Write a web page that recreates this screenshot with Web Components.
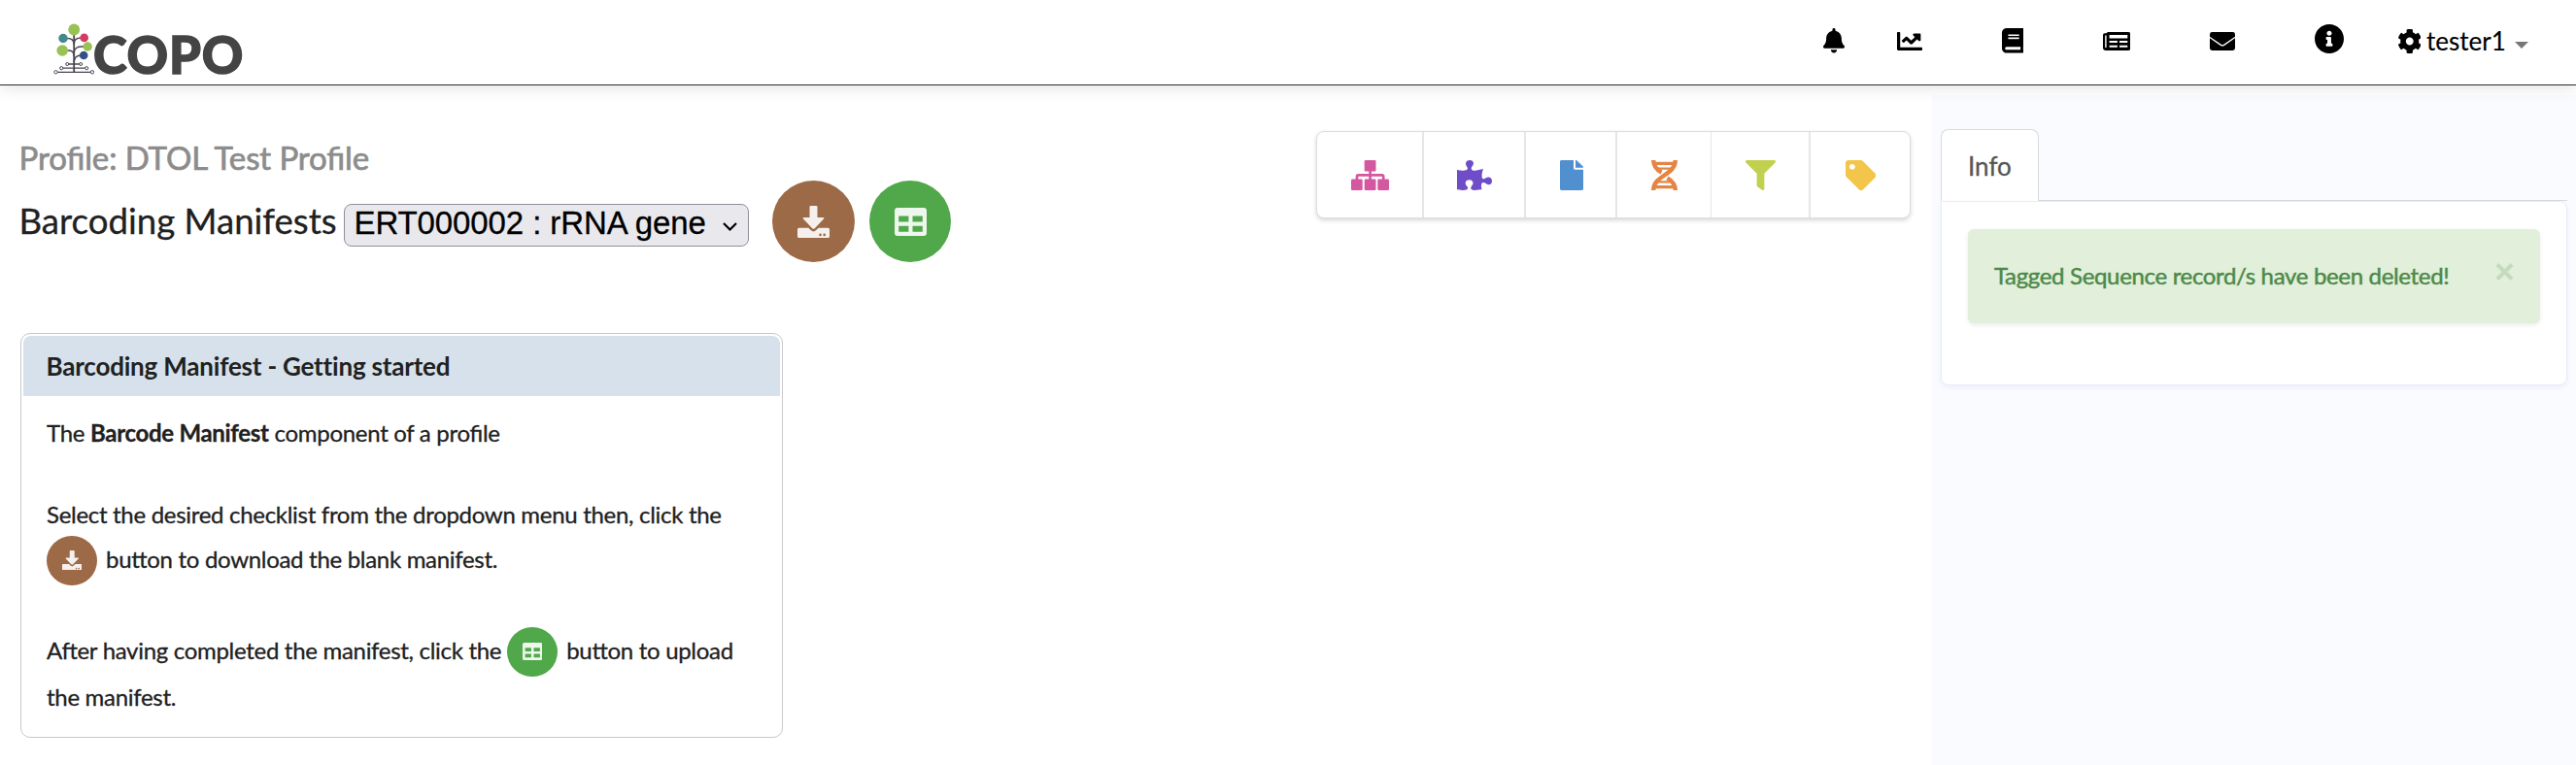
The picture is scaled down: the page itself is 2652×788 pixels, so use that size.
<!DOCTYPE html>
<html lang="en">
<head>
<meta charset="utf-8">
<title>COPO</title>
<style>
html,body{margin:0;background:#fff}
body{font-family:Lato,"Liberation Sans",sans-serif;color:#212121;font-size:24px;font-feature-settings:"liga" 1;-webkit-text-stroke:.3px currentColor}
</style>
</head>
<body>
<copo-app></copo-app>
<script>
const ICONS = {
bell:['0 0 448 512','<path d="M224 512c35.32 0 63.97-28.65 63.97-64H160.03c0 35.35 28.65 64 63.97 64zm215.39-149.71c-19.32-20.76-55.47-51.99-55.47-154.29 0-77.7-54.48-139.9-127.94-155.16V32c0-17.67-14.32-32-31.98-32s-31.98 14.33-31.98 32v20.84C118.56 68.1 64.08 130.3 64.08 208c0 102.3-36.15 133.53-55.47 154.29-6 6.45-8.66 14.16-8.61 21.71.11 16.4 12.98 32 32.1 32h383.8c19.12 0 32-15.6 32.1-32 .05-7.55-2.61-15.27-8.61-21.71z"/>'],
chart:['0 64 512 384','<path d="M496 384H64V80c0-8.84-7.16-16-16-16H16C7.16 64 0 71.16 0 80v336c0 17.67 14.33 32 32 32h464c8.84 0 16-7.16 16-16v-32c0-8.84-7.16-16-16-16zM464 96H345.94c-21.38 0-32.09 25.85-16.97 40.97l32.4 32.4L288 242.75l-73.37-73.37c-12.5-12.5-32.76-12.5-45.25 0l-68.69 68.69c-6.25 6.25-6.25 16.38 0 22.63l22.62 22.62c6.25 6.25 16.38 6.25 22.63 0L192 237.25l73.37 73.37c12.5 12.5 32.76 12.5 45.25 0l96-96 32.4 32.4c15.12 15.12 40.97 4.41 40.97-16.97V112c.01-8.84-7.15-16-15.99-16z"/>'],
book:['0 0 448 512','<path d="M448 360V24c0-13.3-10.7-24-24-24H96C43 0 0 43 0 96v320c0 53 43 96 96 96h328c13.3 0 24-10.7 24-24v-16c0-7.5-3.5-14.3-8.9-18.7-4.2-15.4-4.2-59.3 0-74.7 5.4-4.3 8.9-11.1 8.9-18.6zM128 134c0-3.3 2.7-6 6-6h212c3.3 0 6 2.7 6 6v20c0 3.3-2.7 6-6 6H134c-3.3 0-6-2.7-6-6v-20zm0 64c0-3.3 2.7-6 6-6h212c3.3 0 6 2.7 6 6v20c0 3.3-2.7 6-6 6H134c-3.3 0-6-2.7-6-6v-20zm253.4 250H96c-17.7 0-32-14.3-32-32 0-17.6 14.4-32 32-32h285.4c-1.9 17.1-1.9 46.9 0 64z"/>'],
news:['0 0 28.5 19','<path fill-rule="evenodd" d="M6 0H26a2.5 2.5 0 0 1 2.5 2.500V16.500A2.500 2.500 0 0 1 26 19H3A3 3 0 0 1 0 16V3A1.800 1.800 0 0 1 1.800 1.200H3.500A2.500 2.500 0 0 1 6 0ZM2.200 3.500V15.600A.7 .7 0 0 0 3.600 15.600V3.500ZM6.600 3V6.400H25.300V3ZM6.600 9V11H14.900V9ZM17 9V11H25.300V9ZM6.600 13.700V15.800H14.900V13.700ZM17 13.700V15.800H25.300V13.700Z"/>'],
mail:['0 0 26 19','<rect width="26" height="19" rx="2.400"/><path d="M-.5 5.200 11.400 13.400Q13 14.400 14.600 13.400L26.500 5.200" fill="none" stroke="#fff" stroke-width="1.300"/>'],
info:['8 8 496 496','<path d="M256 8C119.043 8 8 119.083 8 256c0 136.997 111.043 248 248 248s248-111.003 248-248C504 119.083 392.957 8 256 8zm0 110c23.196 0 42 18.804 42 42s-18.804 42-42 42-42-18.804-42-42 18.804-42 42-42zm56 254c0 6.627-5.373 12-12 12h-88c-6.627 0-12-5.373-12-12v-24c0-6.627 5.373-12 12-12h12v-64h-12c-6.627 0-12-5.373-12-12v-24c0-6.627 5.373-12 12-12h64c6.627 0 12 5.373 12 12v100h12c6.627 0 12 5.373 12 12v24z"/>'],
cog:['18 8 476 496','<path d="M487.4 315.7l-42.6-24.6c4.3-23.2 4.3-47 0-70.2l42.6-24.6c4.9-2.8 7.1-8.6 5.5-14-11.1-35.6-30-67.8-54.7-94.6-3.8-4.1-10-5.1-14.8-2.3L380.8 110c-17.9-15.4-38.5-27.3-60.8-35.1V25.8c0-5.6-3.9-10.5-9.4-11.7-36.7-8.2-74.3-7.8-109.2 0-5.5 1.2-9.4 6.1-9.4 11.7V75c-22.2 7.9-42.8 19.8-60.8 35.1L88.7 85.5c-4.9-2.8-11-1.9-14.8 2.3-24.7 26.7-43.6 58.9-54.7 94.6-1.7 5.4.6 11.2 5.5 14L67.3 221c-4.3 23.2-4.3 47 0 70.2l-42.6 24.6c-4.9 2.8-7.1 8.6-5.5 14 11.1 35.6 30 67.8 54.7 94.6 3.8 4.1 10 5.1 14.8 2.3l42.6-24.6c17.9 15.4 38.5 27.3 60.8 35.1v49.2c0 5.6 3.9 10.5 9.4 11.7 36.7 8.2 74.3 7.8 109.2 0 5.5-1.2 9.4-6.1 9.4-11.7v-49.2c22.2-7.9 42.8-19.8 60.8-35.1l42.6 24.6c4.9 2.8 11 1.9 14.8-2.3 24.7-26.7 43.6-58.9 54.7-94.6 1.5-5.5-.7-11.3-5.6-14.1zM256 336c-44.1 0-80-35.9-80-80s35.9-80 80-80 80 35.9 80 80-35.9 80-80 80z"/>'],
caret:['0 0 14 7','<path d="M0 0H14L7 7Z"/>'],
chevron:['0 0 15 9','<path d="M1 1 7.500 7.500 14 1" fill="none" stroke="#000" stroke-width="2.200"/>'],
sitemap:['0 0 39 31','<rect x="13.700" width="11.800" height="11.400" rx="1.200"/><rect y="19.600" width="11.700" height="11.400" rx="1.200"/><rect x="13.700" y="19.600" width="11.800" height="11.400" rx="1.200"/><rect x="27.300" y="19.600" width="11.700" height="11.400" rx="1.200"/><path d="M19.600 11V20M6 20V16.800Q6 15.300 7.500 15.300H31.700Q33.200 15.300 33.200 16.800V20" fill="none" stroke="currentColor" stroke-width="2.700"/>'],
puzzle:['0 0 576 512','<path d="M519.442 288.651c-41.519 0-59.5 31.593-82.058 31.593C377.409 320.244 432 144 432 144s-196.288 80-196.288-3.297c0-35.827 36.288-46.25 36.288-85.985C272 19.216 243.885 0 210.539 0c-34.654 0-66.366 18.891-66.366 56.346 0 41.364 31.711 59.277 31.711 81.75C175.885 207.719 0 166.758 0 166.758v333.237s178.635 41.047 178.635-28.662c0-22.473-40-40.107-40-81.471 0-37.456 29.25-56.346 63.577-56.346 33.673 0 61.788 19.216 61.788 54.717 0 39.735-36.288 50.158-36.288 85.985 0 60.803 129.675 25.73 181.23 25.73 0 0-34.725-120.101 25.827-120.101 35.962 0 46.423 36.152 86.308 36.152C556.712 416 576 387.99 576 354.443c0-34.199-18.962-65.792-56.558-65.792z"/>'],
file:['0 0 384 512','<path d="M224 136V0H24C10.700 0 0 10.700 0 24v464c0 13.300 10.700 24 24 24h336c13.300 0 24-10.700 24-24V160H248c-13.200 0-24-10.800-24-24zm160-14.100v6.100H256V0h6.100c6.400 0 12.500 2.500 17 7l97.900 98c4.500 4.500 7 10.600 7 16.900z"/>'],
dna:['0 0 27 31','<g fill="none" stroke="currentColor"><path d="M3 3.400H24M3 27.600H24" stroke-width="3.400"/><path d="M5 8.600H22M6 22.400H21" stroke-width="2.200"/><path d="M24.800 0C24.800 15.500 2.200 15.500 2.200 31" stroke-width="4.400"/><path d="M2.200 0C2.200 6.500 6 10 10.500 12.600M16.500 18.400C21 21 24.800 24.500 24.800 31" stroke-width="4.400"/></g>'],
filter:['0 0 512 512','<path d="M487.976 0H24.028C2.710 0-8.047 25.866 7.058 40.971L192 225.941V432c0 7.831 3.821 15.170 10.237 19.662l80 55.980C298.020 518.690 320 507.493 320 487.980V225.941l184.947-184.970C520.021 25.896 509.338 0 487.976 0z"/>'],
tag:['0 0 512 512','<path d="M0 252.118V48C0 21.490 21.490 0 48 0h204.118a48 48 0 0 1 33.941 14.059l211.882 211.882c18.745 18.745 18.745 49.137 0 67.882L293.823 497.941c-18.745 18.745-49.137 18.745-67.882 0L14.059 286.059A48 48 0 0 1 0 252.118zM112 64c-26.510 0-48 21.490-48 48s21.490 48 48 48 48-21.490 48-48-21.490-48-48-48z"/>'],
download:['0 0 33 33','<path fill-rule="evenodd" d="M13.700 0H19.300Q20.500 0 20.500 1.200V12H26.300Q28.200 12 27 13.600L18 23.100Q16.500 24.600 15 23.100L6 13.600Q4.800 12 6.700 12H12.500V1.200Q12.500 0 13.700 0Z"/><path fill-rule="evenodd" d="M1.500 22.700H11.300L13.700 25.100Q16.500 27.700 19.300 25.100L21.700 22.700H31.500Q33 22.700 33 24.200V31.500Q33 33 31.500 33H1.500Q0 33 0 31.500V24.200Q0 22.700 1.500 22.700ZM23.500 28.600a1.300 1.300 0 1 0 0 2.600a1.300 1.300 0 1 0 0-2.600ZM27.700 28.600a1.300 1.300 0 1 0 0 2.600a1.300 1.300 0 1 0 0-2.600Z"/>'],
table:['0 0 33 29','<path fill-rule="evenodd" d="M3 0H30Q33 0 33 3V26Q33 29 30 29H3Q0 29 0 26V3Q0 0 3 0ZM4.200 8.500V14.500H14.400V8.500ZM18.500 8.500V14.500H28.800V8.500ZM4.200 18.700V24.700H14.400V18.700ZM18.500 18.700V24.700H28.800V18.700Z"/>']
};
class Base extends HTMLElement{
  constructor(){super();this.attachShadow({mode:'open'});}
  connectedCallback(){this.shadowRoot.innerHTML=this.view();}
}
customElements.define('copo-icon',class extends Base{
  view(){const [vb,body]=ICONS[this.getAttribute('name')];
    return `<style>:host{display:block;flex:none}svg{display:block}</style><svg width="${this.getAttribute('w')}" height="${this.getAttribute('h')}" viewBox="${vb}" preserveAspectRatio="none" fill="currentColor">${body}</svg>`;}
});
customElements.define('copo-logo',class extends Base{
  view(){return `<style>:host{display:flex;color:#444}svg{display:block;flex:none}
  .w{font:900 52.5px/64px Lato,sans-serif;letter-spacing:.8px;margin-left:-.5px;-webkit-text-stroke:1.4px currentColor}</style>
  <svg width="42" height="54" viewBox="54.500 24 42 54" fill="none" stroke="#4a4452" stroke-width="1.300">
  <path stroke-width="1.800" d="M75.700 34V75"/><path stroke-width="1.500" d="M68 39.500Q75.700 39 75.700 46M83 39Q75.700 39 75.700 45M69 52Q75.700 51.500 75.700 58M86 48Q75.700 47 75.700 55M83 57Q76 57 75.700 64"/>
  <path d="M70 66H82M64 70.200H88M58.500 74.300H93"/>
  <g fill="#fff" stroke-width="1"><circle cx="68.700" cy="66" r="1.500"/><circle cx="82.700" cy="66" r="1.500"/><circle cx="62.700" cy="70.200" r="1.600"/><circle cx="88.700" cy="70.200" r="1.600"/><circle cx="57" cy="74.300" r="1.700"/><circle cx="94.500" cy="74.300" r="1.700"/></g>
  <g stroke="none"><circle cx="75.700" cy="30.500" r="5.900" fill="#98c254"/><circle cx="64.500" cy="39.500" r="4.700" fill="#43888a"/><circle cx="86.200" cy="38.900" r="4.300" fill="#d43a63"/><circle cx="63.700" cy="52" r="5.800" fill="#98c254"/><circle cx="89.700" cy="48" r="4.700" fill="#98c254"/><circle cx="85.700" cy="57" r="4.300" fill="#33508a"/></g></svg><span class="w">COPO</span>`;}
});
customElements.define('copo-navbar',class extends Base{
  view(){return `<style>:host{display:flex;box-sizing:border-box;height:88px;border-bottom:1px solid #2c2c2c;box-shadow:0 2px 16px rgba(0,0,0,.12);background:#fff;color:#000;position:relative;z-index:1}
  copo-logo{margin:24px 0 0 54.500px;height:60px}
  nav{margin-left:auto;display:flex;height:84px;align-items:center;padding-right:49.5px}
  nav>*{margin-left:var(--g)}.u{font-size:26px;line-height:32px;width:82px;white-space:nowrap;-webkit-text-stroke-width:.15px}
  .c{color:#777;margin-top:9px}</style>
  <copo-logo></copo-logo><nav>
  <copo-icon name="bell" w="22" h="25.500"></copo-icon>
  <copo-icon name="chart" w="26" h="19" style="--g:54.500px"></copo-icon>
  <copo-icon name="book" w="22.500" h="25.500" style="--g:81.500px"></copo-icon>
  <copo-icon name="news" w="28.500" h="19" style="--g:81.500px"></copo-icon>
  <copo-icon name="mail" w="26" h="19" style="--g:82px"></copo-icon>
  <copo-icon name="info" w="30" h="30" style="--g:81.500px;margin-top:-4px"></copo-icon>
  <copo-icon name="cog" w="23.500" h="25" style="--g:56px"></copo-icon>
  <span class="u" style="--g:6px">tester1</span>
  <copo-icon class="c" name="caret" w="14" h="7" style="--g:8.500px"></copo-icon></nav>`;}
});
customElements.define('copo-round',class extends Base{
  view(){const s=this.hasAttribute('small'),d=this.getAttribute('kind')==='download';
    return `<style>:host{display:flex;flex:none;align-items:center;justify-content:center;border-radius:50%;color:rgba(255,255,255,.9);background:${d?'#9c6a46':'#50a84b'};width:${s?51.500:(d?85:84)}px;height:${s?51:84}px}</style>
    <copo-icon name="${d?'download':'table'}" w="${s?20.500:33}" h="${d?(s?20.500:33):(s?18:29)}"></copo-icon>`;}
});
customElements.define('copo-select',class extends Base{
  view(){return `<style>:host{display:flex;box-sizing:border-box;width:417px;height:44px;border:1px solid #8f8f9d;border-radius:8px;background:#e9e9ed;color:#000;align-items:center;font:33px/42px "Liberation Sans",sans-serif;letter-spacing:-.1px;padding:0 11px 0 9.500px;justify-content:space-between;white-space:nowrap}
  span{margin-top:-5px}copo-icon{margin-top:2px}</style><span><slot></slot></span><copo-icon name="chevron" w="15" h="9"></copo-icon>`;}
});
customElements.define('copo-toolbar',class extends Base{
  view(){const c=[['sitemap',39,'#d4589f',109.500,2],['puzzle',36,'#6f4cc8',105,2],['file',24,'#5190cf',94,2],['dna',27,'#e58544',97,1],['filter',31,'#c1d14f',102,2],['tag',31.500,'#f3c54b',102.500,0]];
    return `<style>:host{display:flex;box-sizing:border-box;height:90px;border:1px solid #dcdddd;border-radius:8px;background:#fff;box-shadow:0 2px 4px rgba(34,36,38,.18);width:612px;overflow:hidden}
    div{box-sizing:border-box;display:flex;align-items:center;justify-content:center;border-right:0 solid #e6e6e6;padding-left:2px}div:last-child{flex:1;padding-left:1px}</style>`+
    c.map(([n,w,k,W,b])=>`<div style="width:${W}px;border-right-width:${b}px;color:${k}"><copo-icon name="${n}" w="${w}" h="31"></copo-icon></div>`).join('');}
});
customElements.define('copo-card',class extends Base{
  view(){return `<style>:host{display:block;box-sizing:border-box;width:785.500px;height:417px;border:1px solid #c6c8ca;border-radius:10px;padding:2px 2px 0;background:#fff}
  header{height:62px;background:#d6e1eb;border-radius:8px 8px 0 0;font:bold 26px/63px Lato,sans-serif;letter-spacing:-.2px;-webkit-text-stroke:0;padding-left:24px;margin-bottom:13px}
  section{padding-left:24.5px}</style><header><slot name="title"></slot></header><section><slot></slot></section>`;}
});
customElements.define('copo-line',class extends Base{
  view(){return `<style>:host{display:flex;align-items:center;height:48px;white-space:pre;line-height:30px;font-size:24px;letter-spacing:-.3px}::slotted(span){margin-top:2px}::slotted(copo-round){margin:4px 9.500px 0 0}</style><slot></slot>`;}
});
customElements.define('copo-alert',class extends Base{
  view(){return `<style>:host{display:flex;box-sizing:border-box;height:97px;border-radius:6px;background:#e2efda;box-shadow:0 2px 5px rgba(0,0,0,.08);color:#4c8a48;padding:0 27px;align-items:center;justify-content:space-between;letter-spacing:-.33px;text-shadow:0 1px 0 rgba(255,255,255,.5);-webkit-text-stroke-width:.5px}
  span{margin-top:-2px}svg{margin-top:-10px}</style><span><slot></slot></span><svg width="19" height="18" viewBox="0 0 19 18"><path d="M2 1.500 17 16.500M17 1.500 2 16.500" stroke="#c3dcbe" stroke-width="4"/></svg>`;}
});
customElements.define('copo-info',class extends Base{
  view(){return `<style>:host{display:block;box-sizing:border-box;padding:35px 9px 0;background:#fafbff}
  .t{display:flex;border-bottom:1px solid #d9dadd;height:73px}
  .t span{box-sizing:border-box;width:101px;height:74px;border:1px solid #d9dadd;border-bottom:0;border-radius:8px 8px 0 0;background:#fff;color:#555;padding-left:27px;font-size:26px;line-height:74px}
  .p{box-sizing:border-box;height:190px;border:1px solid #e6ecf9;border-radius:0 8px 8px 8px;background:#fff;padding:28px 27px;box-shadow:0 2px 5px rgba(60,90,160,.08)}</style>
  <div class="t"><span>Info</span></div><div class="p"><copo-alert>Tagged Sequence record/s have been deleted!</copo-alert></div>`;}
});
customElements.define('copo-app',class extends Base{
  view(){return `<style>:host{display:flex;flex-direction:column;width:2652px;height:788px;overflow:hidden}
  main{display:grid;grid-template-columns:1989px 663px;flex:1}
  copo-info{margin-top:10px}
  .l{padding:47px 22px 0 20.500px}.top{display:flex;justify-content:space-between;height:208px}
  h2,h1{margin:0 0 0 -1px;font-weight:400;white-space:nowrap}h2{font-size:33px;line-height:54px;color:#8c8c8c;letter-spacing:-.1px;-webkit-text-stroke-width:.7px}h1{font-size:36.600px;line-height:54px;margin-top:-2px}
  .r{display:flex;align-items:center;height:84px;margin-top:-3px}copo-select{margin:8px 24px 0 0}h1{width:334.500px}copo-round.b{margin-right:15px}</style>
  <copo-navbar></copo-navbar><main><div class="l"><div class="top"><div><h2>Profile: DTOL Test Profile</h2>
  <div class="r"><h1>Barcoding Manifests</h1><copo-select>ERT000002 : rRNA gene</copo-select><copo-round class="b" kind="download"></copo-round><copo-round kind="table"></copo-round></div></div><copo-toolbar></copo-toolbar></div>
  <copo-card><span slot="title">Barcoding Manifest - Getting started</span>
  <copo-line><span>The <b>Barcode Manifest</b> component of a profile</span></copo-line>
  <copo-line style="height:46px;margin-top:37px"><span>Select the desired checklist from the dropdown menu then, click the</span></copo-line>
  <copo-line style="height:46px"><copo-round small kind="download"></copo-round><span>button to download the blank manifest.</span></copo-line>
  <copo-line style="margin-top:47px"><span style="margin-right:6px">After having completed the manifest, click the</span><copo-round small kind="table"></copo-round><span>button to upload</span></copo-line>
  <copo-line><span>the manifest.</span></copo-line></copo-card></div><copo-info></copo-info></main>`;}
});
</script>
</body>
</html>
